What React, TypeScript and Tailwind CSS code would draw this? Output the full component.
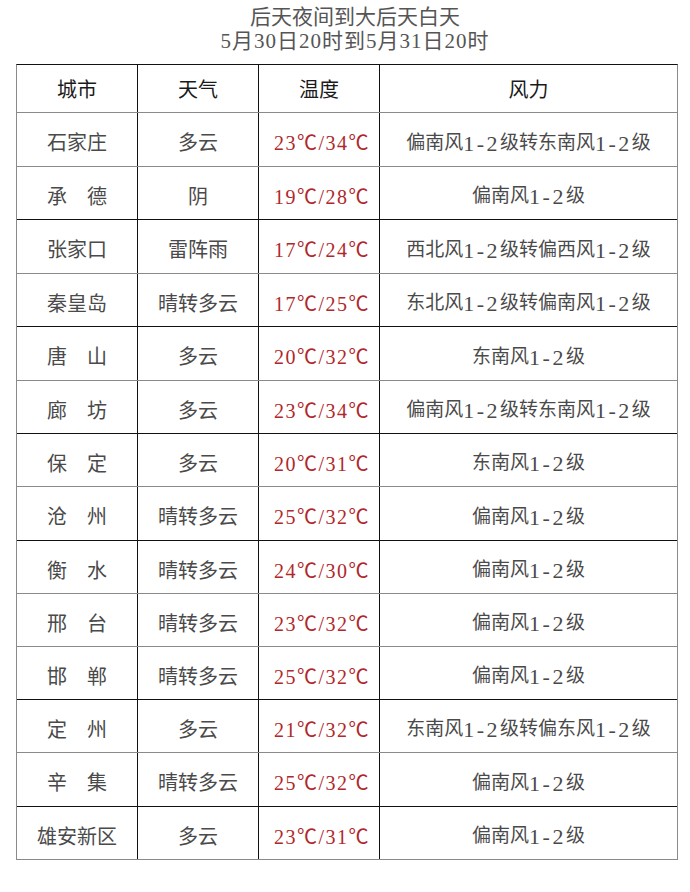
import React from "react";

type Row = {
  city: string;
  weather: string;
  temp: string;
  wind: string;
  h: string;
  line: string;
};

const rows: Row[] = [
  { city: "石家庄", weather: "多云", temp: "23℃/34℃", wind: "偏南风1-2级转东南风1-2级", h: "h-[54px]", line: "border-b-[#8a8a8a]" },
  { city: "承　德", weather: "阴", temp: "19℃/28℃", wind: "偏南风1-2级", h: "h-[53px]", line: "border-b-[#111]" },
  { city: "张家口", weather: "雷阵雨", temp: "17℃/24℃", wind: "西北风1-2级转偏西风1-2级", h: "h-[54px]", line: "border-b-[#8a8a8a]" },
  { city: "秦皇岛", weather: "晴转多云", temp: "17℃/25℃", wind: "东北风1-2级转偏南风1-2级", h: "h-[53px]", line: "border-b-[#111]" },
  { city: "唐　山", weather: "多云", temp: "20℃/32℃", wind: "东南风1-2级", h: "h-[54px]", line: "border-b-[#8a8a8a]" },
  { city: "廊　坊", weather: "多云", temp: "23℃/34℃", wind: "偏南风1-2级转东南风1-2级", h: "h-[53px]", line: "border-b-[#111]" },
  { city: "保　定", weather: "多云", temp: "20℃/31℃", wind: "东南风1-2级", h: "h-[53px]", line: "border-b-[#8a8a8a]" },
  { city: "沧　州", weather: "晴转多云", temp: "25℃/32℃", wind: "偏南风1-2级", h: "h-[54px]", line: "border-b-[#111]" },
  { city: "衡　水", weather: "晴转多云", temp: "24℃/30℃", wind: "偏南风1-2级", h: "h-[53px]", line: "border-b-[#8a8a8a]" },
  { city: "邢　台", weather: "晴转多云", temp: "23℃/32℃", wind: "偏南风1-2级", h: "h-[53px]", line: "border-b-[#8a8a8a]" },
  { city: "邯　郸", weather: "晴转多云", temp: "25℃/32℃", wind: "偏南风1-2级", h: "h-[53px]", line: "border-b-[#111]" },
  { city: "定　州", weather: "多云", temp: "21℃/32℃", wind: "东南风1-2级转偏东风1-2级", h: "h-[53px]", line: "border-b-[#8a8a8a]" },
  { city: "辛　集", weather: "晴转多云", temp: "25℃/32℃", wind: "偏南风1-2级", h: "h-[54px]", line: "border-b-[#111]" },
  { city: "雄安新区", weather: "多云", temp: "23℃/31℃", wind: "偏南风1-2级", h: "h-[53px]", line: "border-b-[#8a8a8a]" },
];

function Wind({ text }: { text: string }) {
  const parts = text.split(/([0-9-]+)/).filter((p) => p.length > 0);
  return (
    <>
      {parts.map((p, i) =>
        /^[0-9-]+$/.test(p) ? (
          <span key={i} className="tracking-[2.5px] text-[22px]">
            {p}
          </span>
        ) : (
          <span key={i}>{p}</span>
        )
      )}
    </>
  );
}

export default function App() {
  return (
    <div className="w-[690px] h-[892px] bg-white font-['Liberation_Serif','Noto_Sans_CJK_SC',serif] text-[#4a4a4a]">
      <div className="h-[64px] pt-[6px] pl-[20px] flex flex-col items-center text-[21px] leading-[23.5px] text-[#555]">
        <div>后天夜间到大后天白天</div>
        <div className="tracking-[1px]">5月30日20时到5月31日20时</div>
      </div>
      <div className="ml-[16px] w-[662px] border-l border-r border-[#8a8a8a] border-t border-t-[#111]">
        <div className="grid grid-cols-[121px_121px_121px_1fr] h-[48px] border-b border-b-[#8a8a8a] text-[20px] text-[#1a1a1a]">
          <div className="flex items-center justify-center pt-[3px] border-r border-[#111]">城市</div>
          <div className="flex items-center justify-center pt-[3px] border-r border-[#111]">天气</div>
          <div className="flex items-center justify-center pt-[3px] border-r border-[#111]">温度</div>
          <div className="flex items-center justify-center pt-[3px]">风力</div>
        </div>
        {rows.map((r, i) => (
          <div key={i} className={`grid grid-cols-[121px_121px_121px_1fr] border-b ${r.h} ${r.line}`}>
            <div className="flex items-center justify-center pt-[7px] border-r border-[#111] text-[20px]">{r.city}</div>
            <div className="flex items-center justify-center pt-[7px] border-r border-[#111] text-[20px]">{r.weather}</div>
            <div className="flex items-center justify-center pt-[7px] pl-[6px] border-r border-[#111] text-[20px] tracking-[1.5px] text-[#b0282c]">{r.temp}</div>
            <div className="flex items-center justify-center pt-[7px] text-[19px]">
              <Wind text={r.wind} />
            </div>
          </div>
        ))}
      </div>
    </div>
  );
}
